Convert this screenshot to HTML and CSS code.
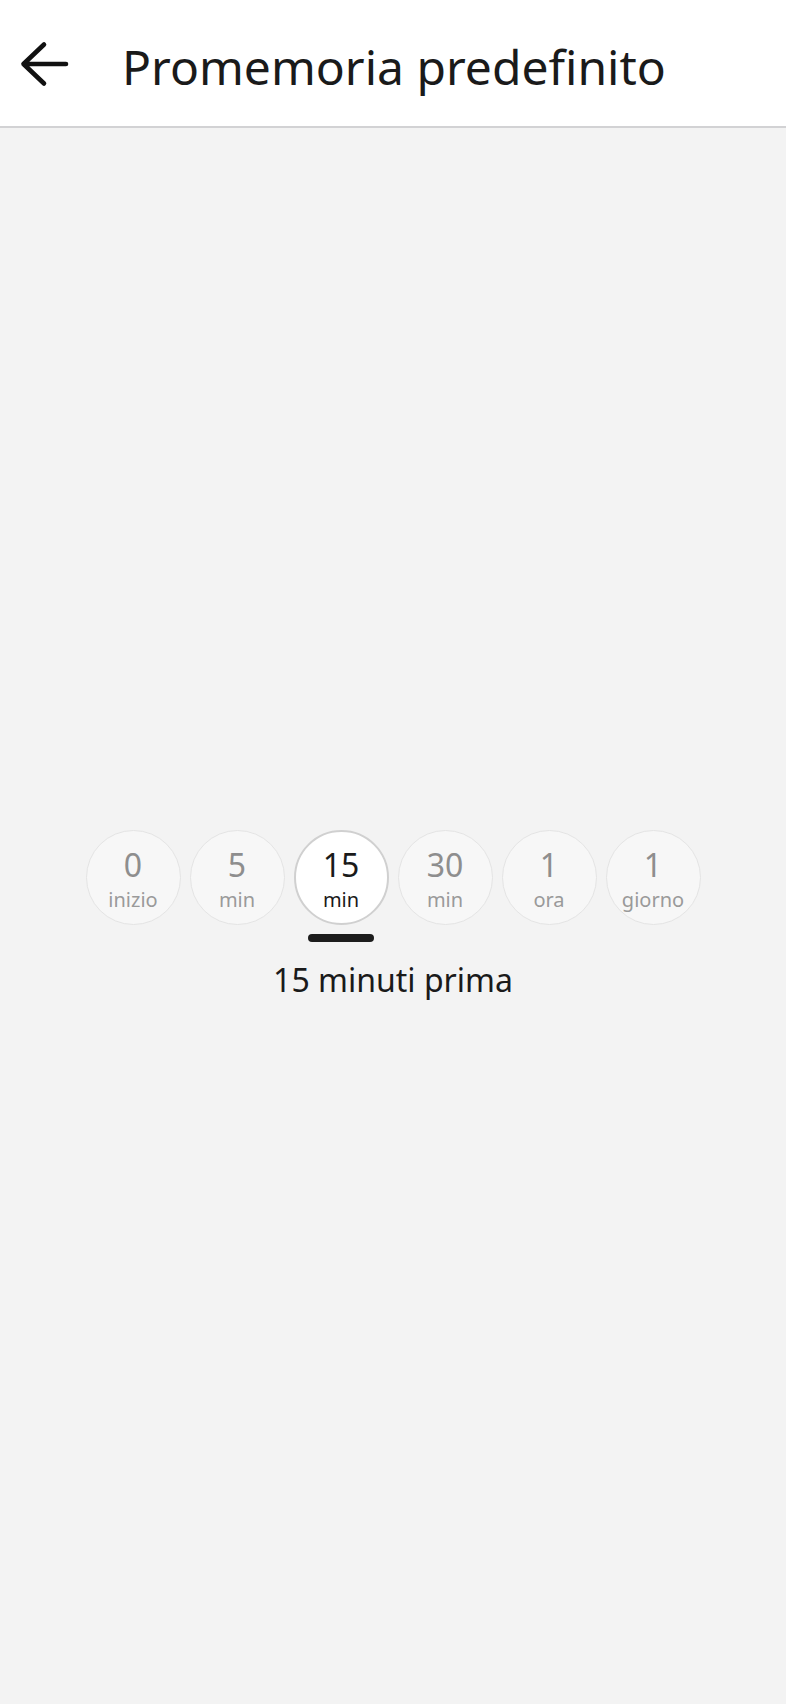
FILE: index.html
```html
<!DOCTYPE html>
<html lang="it">
<head>
  <meta charset="UTF-8" />
  <meta name="viewport" content="width=device-width, initial-scale=1.0"/>
  <title>Promemoria predefinito</title>
  <link rel="stylesheet" href="styles.css">
</head>
<body>

  <header class="top-bar">
    <button class="back-button" aria-label="Indietro">
      <svg width="50" height="48" viewBox="0 0 50 48">
        <path d="M46 24H3.5M24 4.5L3.5 24L24 43.5" fill="none" stroke="#111" stroke-width="4.6" stroke-linecap="round" stroke-linejoin="round"/>
      </svg>
    </button>
    <h1>Promemoria predefinito</h1>
  </header>

  <main class="content">
    <div class="picker">
      <div class="options">
        <div class="option">
          <div class="circle"><span class="num">0</span><span class="unit">inizio</span></div>
          <div class="marker"></div>
        </div>
        <div class="option">
          <div class="circle"><span class="num">5</span><span class="unit">min</span></div>
          <div class="marker"></div>
        </div>
        <div class="option selected">
          <div class="circle"><span class="num">15</span><span class="unit">min</span></div>
          <div class="marker"></div>
        </div>
        <div class="option">
          <div class="circle"><span class="num">30</span><span class="unit">min</span></div>
          <div class="marker"></div>
        </div>
        <div class="option">
          <div class="circle"><span class="num">1</span><span class="unit">ora</span></div>
          <div class="marker"></div>
        </div>
        <div class="option">
          <div class="circle"><span class="num">1</span><span class="unit">giorno</span></div>
          <div class="marker"></div>
        </div>
      </div>
      <p class="summary">15 minuti prima</p>
    </div>
  </main>

</body>
</html>
```

FILE: styles.css
```css
body {
  margin: 0;
  height: 1704px;
  display: flex;
  flex-direction: column;
  font-family: 'Noto Sans', 'Open Sans', sans-serif;
  background: #f3f3f3;
  color: #1a1a1a;
}

/* Barra superiore */
.top-bar {
  height: 126px;
  flex-shrink: 0;
  display: flex;
  align-items: center;
  background: #fff;
  border-bottom: 2px solid #d2d2d4;
  box-sizing: content-box;
}

.back-button {
  border: none;
  background: none;
  padding: 0;
  margin: 2px 0 0 20px;
  width: 50px;
  height: 48px;
  display: flex;
  cursor: pointer;
}

.top-bar h1 {
  margin: 8px 0 0 52px;
  font-size: 48px;
  font-weight: 400;
  line-height: 60px;
  color: #1a1a1a;
}

/* Selettore promemoria */
.content {
  flex: 1;
  display: flex;
  align-items: center;
  justify-content: center;
}

.picker {
  display: flex;
  flex-direction: column;
  align-items: center;
}

.options {
  display: flex;
  gap: 9px;
}

.option {
  display: flex;
  flex-direction: column;
  align-items: center;
  gap: 9px;
}

.circle {
  width: 95px;
  height: 95px;
  box-sizing: border-box;
  border-radius: 50%;
  border: 1.5px solid #e4e4e4;
  background: #f7f7f7;
  display: flex;
  flex-direction: column;
  align-items: center;
  justify-content: center;
  padding-top: 4px;
}

.num {
  font-size: 32px;
  line-height: 36px;
  color: #8e8e8e;
}

.unit {
  font-size: 20px;
  line-height: 24px;
  margin-top: 5px;
  color: #9a9a9a;
}

.marker {
  width: 66px;
  height: 8px;
  border-radius: 4px;
  background: #1c1c1c;
  visibility: hidden;
}

.option.selected .circle {
  background: #fff;
  border: 2px solid #d0d0d0;
}

.option.selected .num,
.option.selected .unit {
  color: #1a1a1a;
}

.option.selected .marker {
  visibility: visible;
}

.summary {
  margin: 16px 0 0;
  font-size: 32px;
  line-height: 44px;
  color: #1a1a1a;
}
```
